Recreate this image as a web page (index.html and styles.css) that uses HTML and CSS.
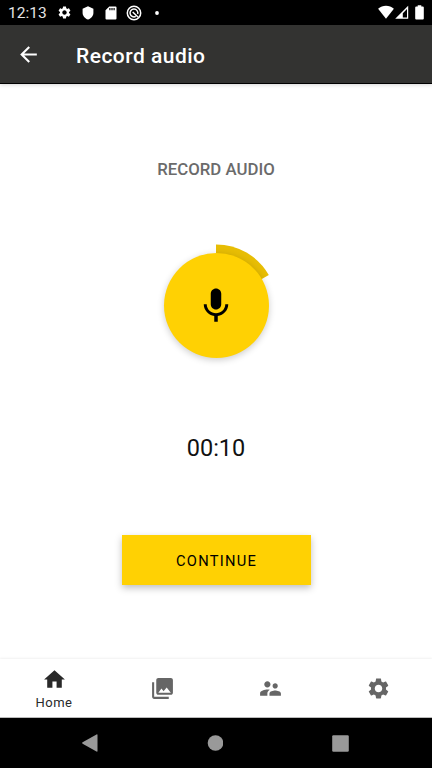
FILE: index.html
```
<!DOCTYPE html>
<html lang="en">
<head>
<meta charset="utf-8">
<title>Record audio</title>
<link rel="stylesheet" href="styles.css">
</head>
<body>
<svg class="defs" width="0" height="0" aria-hidden="true">
  <symbol id="gear" viewBox="0 0 24 24"><path d="M19.14 12.94c.04-.3.06-.61.06-.94 0-.32-.02-.64-.07-.94l2.03-1.58c.18-.14.23-.41.12-.61l-1.92-3.32c-.12-.22-.37-.29-.59-.22l-2.39.96c-.5-.38-1.03-.7-1.62-.94l-.36-2.54c-.04-.24-.24-.41-.48-.41h-3.84c-.24 0-.43.17-.47.41l-.36 2.54c-.59.24-1.13.57-1.62.94l-2.39-.96c-.22-.08-.47 0-.59.22L2.740 8.870c-.12.21-.08.47.12.61l2.030 1.580c-.05.3-.09.63-.09.94s.02.64.07.94l-2.030 1.580c-.18.14-.23.41-.12.61l1.920 3.320c.12.22.37.29.59.22l2.390-.96c.5.38 1.030.7 1.620.94l.36 2.540c.05.24.24.41.48.41h3.840c.24 0 .44-.17.47-.41l.36-2.540c.59-.24 1.130-.56 1.620-.94l2.390.96c.22.08.47 0 .59-.22l1.920-3.320c.12-.22.07-.47-.12-.61l-2.010-1.580zM12 15.600c-1.980 0-3.600-1.620-3.600-3.600s1.620-3.600 3.600-3.600 3.600 1.620 3.600 3.600-1.620 3.600-3.600 3.600z"/></symbol>
</svg>
<div class="screen">
  <div class="status">
    <span class="clock">12:13</span>
    <div class="status-icons">
      <svg width="15" height="15"><use href="#gear"/></svg>
      <svg width="12" height="14" viewBox="0 0 12 14"><path d="M6 .3L.6 2.700v4c0 3.200 2.300 5.900 5.400 6.800 3.100-.9 5.400-3.600 5.400-6.800v-4z"/></svg>
      <svg width="12" height="14" viewBox="0 0 12 14"><path fill-rule="evenodd" d="M4.300.5H10.500q1 0 1 1v11q0 1-1 1H1.500q-1 0-1-1V4.300zM4.300 2v2.300h1.200V2zm2.100 0v2.300h1.200V2zm2.100 0v2.300h1.200V2z"/></svg>
      <svg class="line" width="16" height="16" viewBox="0 0 16 16"><circle cx="8" cy="8" r="6.700"/><path d="M9.800 11.400A3.900 3.900 0 1 1 11.700 9M6.700 7l5.500 5.200"/></svg>
      <svg width="4" height="4"><circle cx="2" cy="2" r="1.900"/></svg>
    </div>
    <div class="signals">
      <svg width="16" height="14" viewBox="0 0 16 14"><path d="M8 13.700L.1 3.800C4.500-.4 11.500-.4 15.900 3.800z"/></svg>
      <svg width="14" height="14" viewBox="0 0 14 14"><path fill-rule="evenodd" d="M.2 13.800L13.200.8v13zM7.800 12.600H12V4L7.800 8.200z"/></svg>
      <svg class="battery" width="9" height="15" viewBox="0 0 9 15"><path d="M2.700.3h3.600v1.300h1.500q1 0 1 1v11q0 1-1 1H1.200q-1 0-1-1v-11q0-1 1-1h1.500z"/></svg>
    </div>
  </div>
  <header class="appbar">
    <svg width="25" height="25" viewBox="0 0 24 24"><path d="M20 11H7.830l5.590-5.590L12 4l-8 8 8 8 1.410-1.410L7.830 13H20v-2z"/></svg>
    <h1>Record audio</h1>
  </header>
  <main>
    <h2>RECORD AUDIO</h2>
    <div class="recorder">
      <svg class="progress" width="122" height="122" viewBox="-61 -61 122 122"><path d="M0 0V-60.500A60.500 60.500 0 0 1 52.800-30z"/></svg>
      <button class="mic" aria-label="Record"><svg width="42" height="42" viewBox="0 0 24 24"><path d="M12 14c1.660 0 2.990-1.340 2.990-3L15 5c0-1.660-1.340-3-3-3S9 3.340 9 5v6c0 1.660 1.340 3 3 3zm5.300-3c0 3-2.540 5.100-5.300 5.100S6.700 14 6.700 11H5c0 3.410 2.720 6.230 6 6.720V21h2v-3.280c3.280-.48 6-3.300 6-6.720h-1.700z"/></svg></button>
    </div>
    <div class="time">00:10</div>
    <button class="continue">CONTINUE</button>
  </main>
  <nav class="tabs">
    <a class="active"><svg width="25" height="25" viewBox="0 0 24 24"><path d="M10 20v-6h4v6h5v-8h3L12 3 2 12h3v8z"/></svg><span>Home</span></a>
    <a><svg width="25" height="25" viewBox="0 0 24 24"><path d="M22 16V4c0-1.100-.9-2-2-2H8c-1.100 0-2 .9-2 2v12c0 1.100.9 2 2 2h12c1.100 0 2-.9 2-2zm-11-4l2.030 2.710L16 11l4 5H8l3-4zM2 6v14c0 1.100.9 2 2 2h14v-2H4V6H2z"/></svg></a>
    <a><svg width="25" height="25" viewBox="0 0 24 24"><path d="M16.500 12c1.380 0 2.490-1.120 2.490-2.500S17.880 7 16.500 7 14 8.120 14 9.500s1.120 2.500 2.500 2.500zM9 11c1.660 0 2.990-1.340 2.990-3S10.660 5 9 5 6 6.340 6 8s1.340 3 3 3zm7.500 3c-1.830 0-5.500.92-5.500 2.750V19h11v-2.250c0-1.830-3.670-2.750-5.500-2.750zM9 13c-2.330 0-7 1.170-7 3.500V19h7v-2.250c0-.85.33-2.340 2.370-3.470C10.500 13.100 9.660 13 9 13z"/></svg></a>
    <a><svg width="25" height="25"><use href="#gear"/></svg></a>
  </nav>
  <div class="system">
    <svg width="16" height="18" viewBox="0 0 16 18"><path d="M.6 8.300L14.500.4q1-.4 1 .6v16q0 1-1 .6L.6 9.700q-.9-.7 0-1.400z"/></svg>
    <svg width="16" height="16"><circle cx="8" cy="8" r="7.800"/></svg>
    <svg width="17" height="17"><rect x=".2" y=".2" width="16.600" height="16.600" rx="1.200"/></svg>
  </div>
</div>
</body>
</html>
```
FILE: styles.css
```
* { box-sizing: border-box; }
body { margin: 0; font-family: Roboto, "Liberation Sans", sans-serif; }
svg { display: block; fill: currentColor; flex: none; }
.defs { position: absolute; }
h1, h2 { margin: 0; }
button { border: 0; padding: 0; font-family: inherit; color: #000; background: #ffd103; }
.screen { width: 432px; height: 768px; display: flex; flex-direction: column; background: #fff; overflow: hidden; }

.status { height: 25px; flex: none; display: flex; align-items: center; background: #000; color: #fff; padding: 0 8px; }
.clock { width: 49px; font-size: 15.500px; line-height: 25px; padding-top: 2px; color: #e4e4e4; }
.status-icons { display: flex; align-items: center; gap: 11px; }
.status-icons svg:nth-child(2) { margin-left: -1px; }
.status-icons svg:last-child { margin-left: 4px; }
.status-icons .line { fill: none; stroke: currentColor; stroke-width: 1.500; margin: 0 -2px; }
.signals { display: flex; align-items: center; margin-left: auto; padding-bottom: 1px; }
.signals svg:nth-child(2) { margin-left: 1px; }
.battery { margin-left: 6px; }

.appbar { height: 59px; flex: none; display: flex; align-items: center; padding-left: 16px; gap: 35px; background: #333331; color: #fff; border-bottom: 1px solid #000; box-shadow: 0 1px 4px rgba(0,0,0,.16); }
.appbar h1 { font-size: 21px; font-weight: 500; line-height: 28px; letter-spacing: .48px; padding-top: 3px; }

main { flex: 1; display: flex; flex-direction: column; align-items: center; padding-top: 75px; }
h2 { font-size: 16.800px; line-height: 20px; font-weight: 500; color: #6b6b6b; }
.recorder { display: grid; place-items: center; width: 122px; height: 122px; margin-top: 65px; }
.recorder > * { grid-area: 1 / 1; }
.progress { color: #e7bd04; }
.mic { display: grid; place-items: center; width: 105px; height: 105px; border-radius: 50%; box-shadow: 0 2px 7px rgba(0,0,0,.2); }
.mic svg { margin-top: 1px; }
.time { margin-top: 67px; font-size: 23.500px; line-height: 30px; color: #111; }
.continue { width: 189px; height: 50px; margin-top: 72px; padding: 2px 0 0 1px; font-size: 14.700px; font-weight: 400; letter-spacing: 1.250px; box-shadow: 0 3px 7px rgba(0,0,0,.25); }

.tabs { height: 59px; flex: none; display: grid; grid-template-columns: repeat(4, 1fr); color: #666; border-bottom: 1px solid #bbb; box-shadow: 0 -1px 2px rgba(0,0,0,.06); }
.tabs a { display: flex; flex-direction: column; align-items: center; justify-content: center; }
.tabs .active { color: #292929; padding-top: 2px; }
.tabs span { font-size: 13px; line-height: 16px; letter-spacing: .45px; margin-top: 3px; }
.system { height: 50px; flex: none; display: flex; align-items: center; justify-content: space-between; padding: 0 83px 0 82px; background: #000; color: #999; }
.system circle { transform: translateX(.5px); }
```
